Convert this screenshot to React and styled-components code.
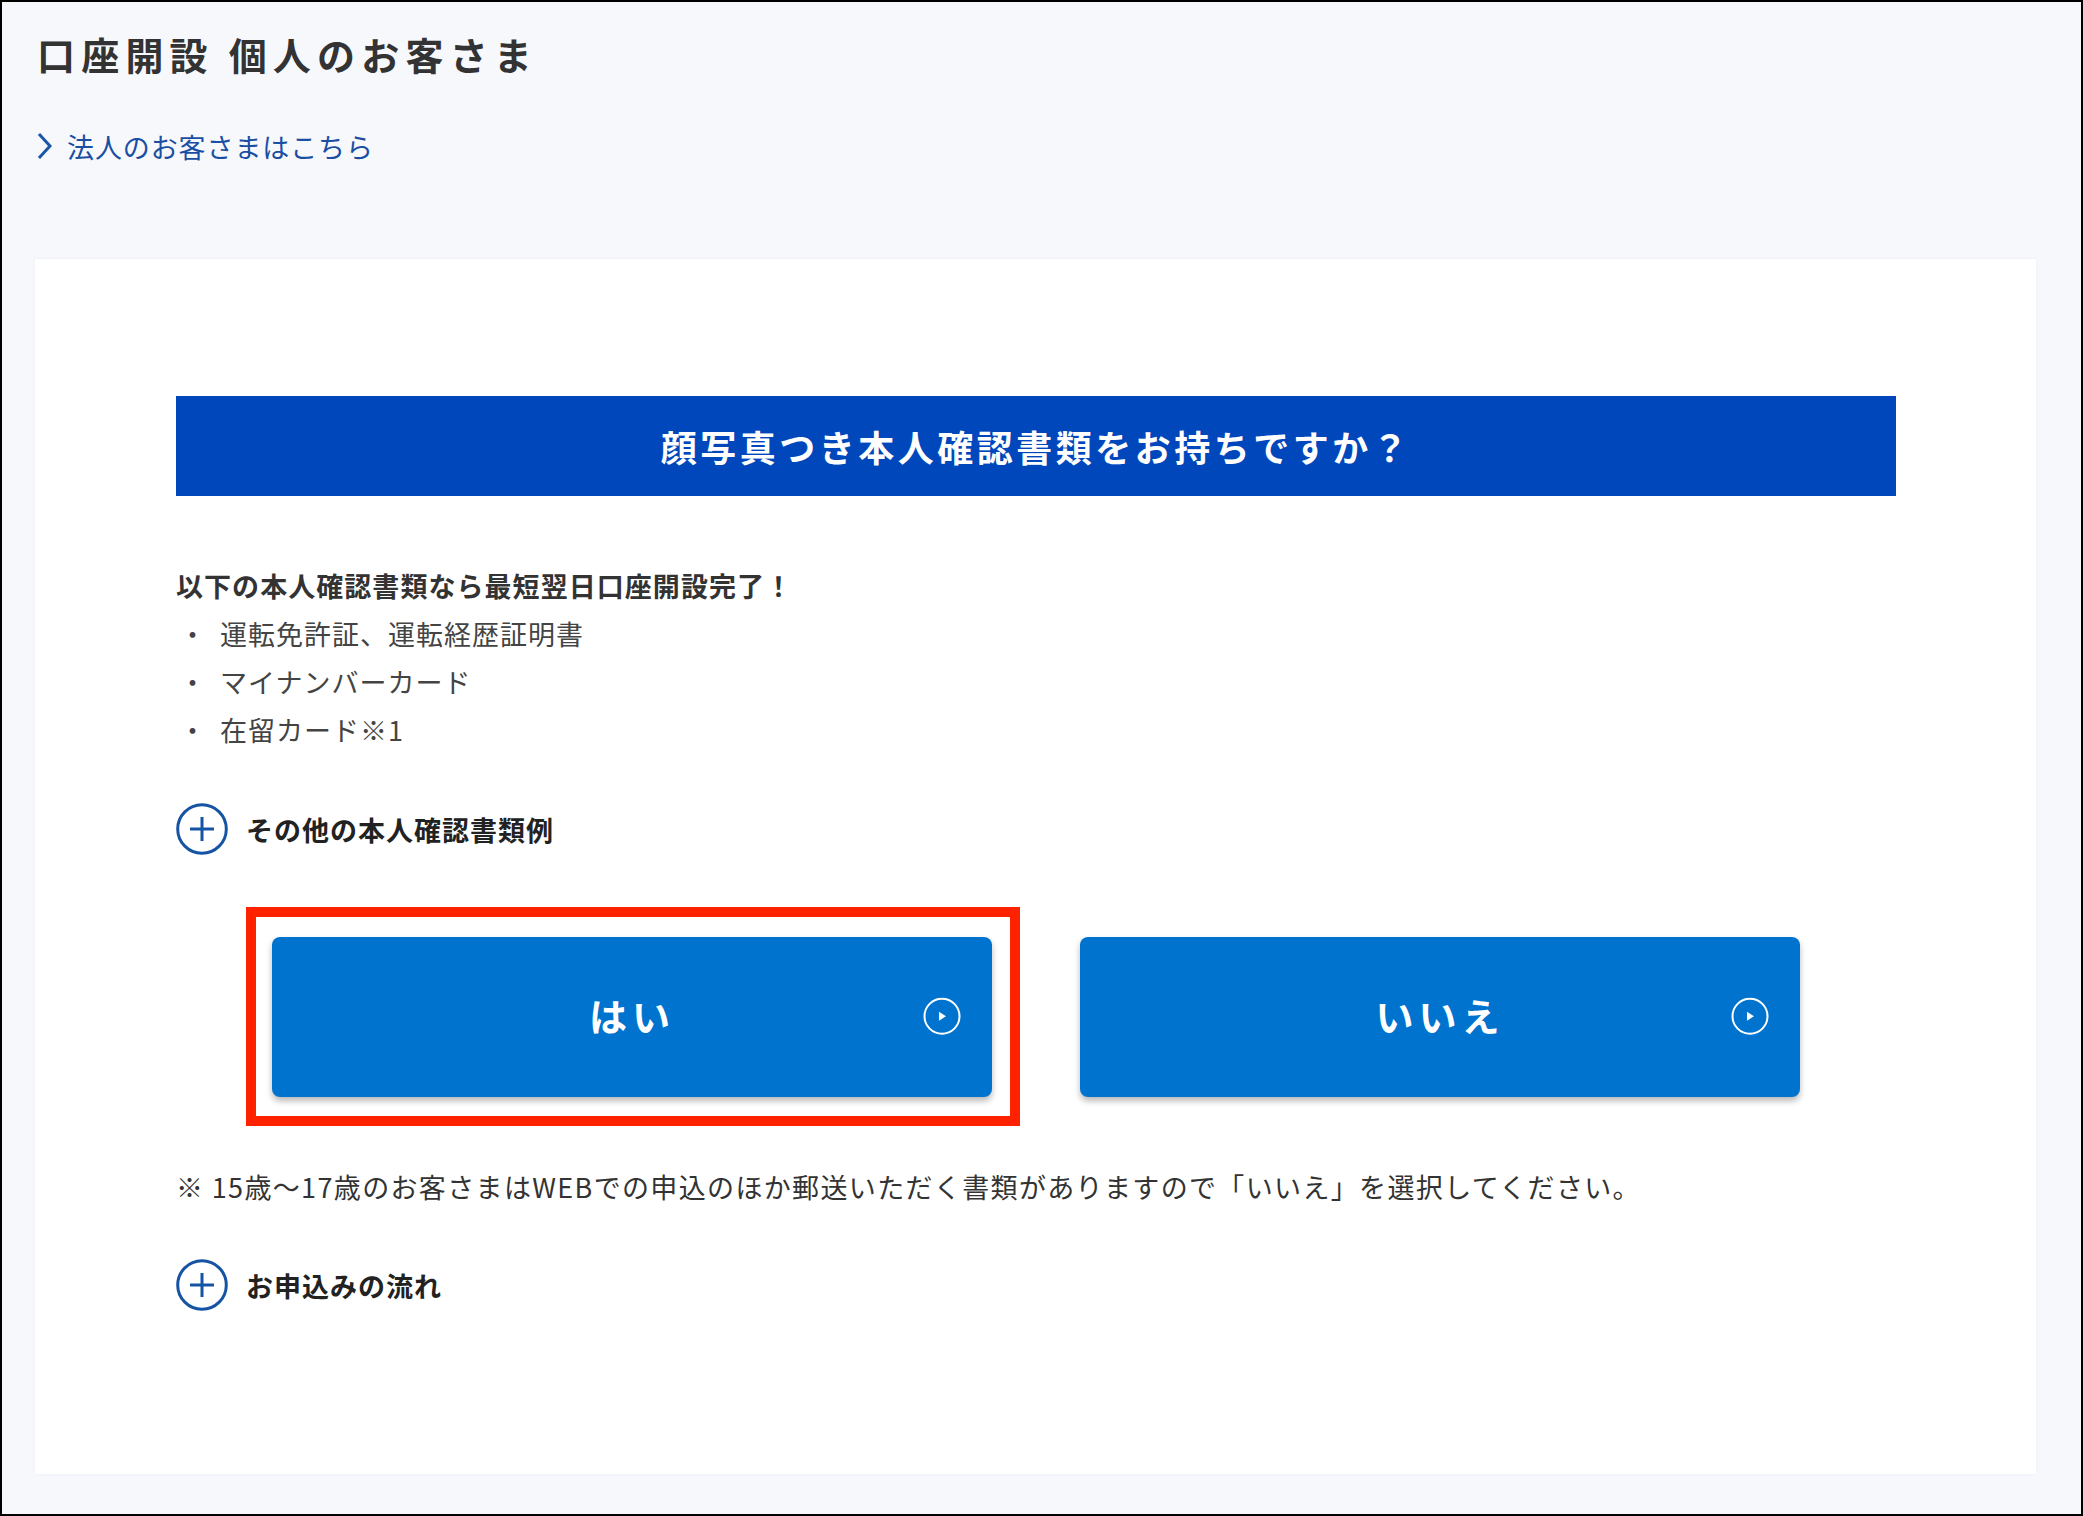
import React from "react";
import styled, { createGlobalStyle } from "styled-components";

const Global = createGlobalStyle`
  html, body { margin: 0; padding: 0; }
  body {
    font-family: "Noto Sans CJK JP", "Noto Sans", sans-serif;
    color: #333;
    -webkit-font-smoothing: antialiased;
  }
  * { box-sizing: border-box; }
`;

const Page = styled.div`
  min-height: 100vh;
  border: 2px solid #000;
  background: #f7f8fc;
  padding: 26px 45px 40px 33px;
  display: flex;
  flex-direction: column;
`;

const Title = styled.h1`
  margin: 0 0 0 2px;
  font-size: 38px;
  line-height: 52px;
  font-weight: 700;
  letter-spacing: 6.2px;
  color: #333;
`;

const SubLink = styled.a`
  margin: 46px 0 0 1px;
  display: flex;
  align-items: center;
  gap: 15px;
  height: 40px;
  font-size: 27px;
  letter-spacing: 0.9px;
  color: #1a4ea3;
  text-decoration: none;
  width: fit-content;
`;

const Card = styled.section`
  margin-top: 93px;
  background: #fff;
  box-shadow: 0 0 3px rgba(30, 50, 120, 0.06);
  padding: 137px 140px 163px 141px;
  display: flex;
  flex-direction: column;
`;

const Banner = styled.h2`
  margin: 0;
  height: 100px;
  background: #0047bc;
  color: #fff;
  display: flex;
  align-items: center;
  justify-content: center;
  font-size: 36px;
  font-weight: 700;
  letter-spacing: 3.5px;
`;

const Lead = styled.p`
  margin: 66px 0 0;
  font-size: 27px;
  line-height: 48px;
  font-weight: 700;
  letter-spacing: 1.05px;
  color: #333;
`;

const List = styled.ul`
  margin: 0;
  padding: 0;
  list-style: none;
`;

const Item = styled.li`
  display: flex;
  font-size: 27px;
  line-height: 48px;
  letter-spacing: 1px;
  color: #444;
`;

const Bullet = styled.span`
  width: 44px;
  padding-left: 3px;
  flex: none;
`;

const Toggle = styled.button`
  margin-top: ${(p) => p.$top}px;
  display: flex;
  align-items: center;
  gap: 18px;
  padding: 0;
  border: 0;
  background: none;
  font-family: inherit;
  font-size: 27px;
  font-weight: 700;
  letter-spacing: 1px;
  color: #222;
  cursor: pointer;
  width: fit-content;
`;

const Buttons = styled.div`
  margin-top: 82px;
  display: flex;
  justify-content: center;
  gap: 88px;
`;

const Highlight = styled.div`
  position: relative;
  &::after {
    content: "";
    position: absolute;
    inset: -30px -28px -29px -26px;
    border: 10px solid #ff2200;
    pointer-events: none;
  }
`;

const Choice = styled.button`
  position: relative;
  width: 720px;
  height: 160px;
  padding: 0 0 6px;
  border: 0;
  border-radius: 8px;
  background: #0073cf;
  box-shadow: 0 4px 6px rgba(0, 0, 0, 0.28);
  color: #fff;
  font-family: inherit;
  font-size: 38px;
  font-weight: 700;
  letter-spacing: 5px;
  display: flex;
  align-items: center;
  justify-content: center;
  cursor: pointer;
`;

const PlayIcon = styled.svg`
  position: absolute;
  right: 31px;
  top: 50%;
  transform: translateY(-52%);
`;

const Note = styled.p`
  margin: 66px 0 0;
  font-size: 27px;
  line-height: 48px;
  letter-spacing: 1.35px;
  color: #333;
`;

const Chevron = () => (
  <svg width="16" height="28" viewBox="0 0 16 28" fill="none">
    <polyline points="3,2 14,14 3,26" stroke="#1a56a6" strokeWidth="3" strokeLinejoin="miter" />
  </svg>
);

const PlusCircle = () => (
  <svg width="52" height="52" viewBox="0 0 52 52" fill="none">
    <circle cx="26" cy="26" r="24.3" stroke="#1553a3" strokeWidth="3" />
    <line x1="14" y1="26" x2="38" y2="26" stroke="#1553a3" strokeWidth="3" />
    <line x1="26" y1="14" x2="26" y2="38" stroke="#1553a3" strokeWidth="3" />
  </svg>
);

const Play = () => (
  <PlayIcon width="38" height="38" viewBox="0 0 38 38" fill="none">
    <circle cx="19" cy="19" r="17.5" stroke="#fff" strokeWidth="2" />
    <polygon points="16,14.5 23,19 16,23.5" fill="#fff" />
  </PlayIcon>
);

const items = ["運転免許証、運転経歴証明書", "マイナンバーカード", "在留カード※1"];

export default function App() {
  return (
    <>
      <Global />
      <Page>
        <Title>口座開設 個人のお客さま</Title>
        <SubLink href="#">
          <Chevron />
          法人のお客さまはこちら
        </SubLink>
        <Card>
          <Banner>顔写真つき本人確認書類をお持ちですか？</Banner>
          <Lead>以下の本人確認書類なら最短翌日口座開設完了！</Lead>
          <List>
            {items.map((t) => (
              <Item key={t}>
                <Bullet>・</Bullet>
                {t}
              </Item>
            ))}
          </List>
          <Toggle $top={49}>
            <PlusCircle />
            その他の本人確認書類例
          </Toggle>
          <Buttons>
            <Highlight>
              <Choice>
                はい
                <Play />
              </Choice>
            </Highlight>
            <Choice>
              いいえ
              <Play />
            </Choice>
          </Buttons>
          <Note>※ 15歳～17歳のお客さまはWEBでの申込のほか郵送いただく書類がありますので「いいえ」を選択してください。</Note>
          <Toggle $top={48}>
            <PlusCircle />
            お申込みの流れ
          </Toggle>
        </Card>
      </Page>
    </>
  );
}
